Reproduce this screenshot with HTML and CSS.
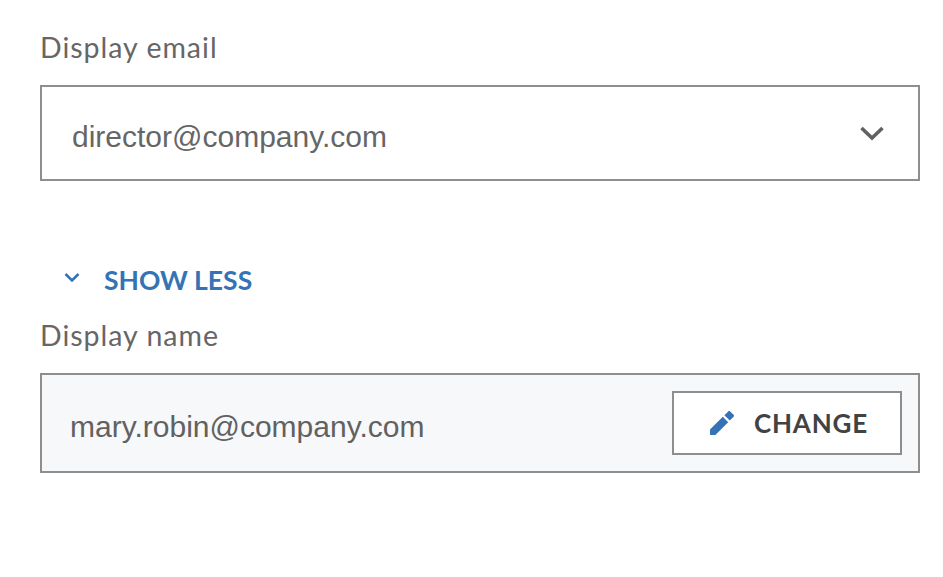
FILE: index.html
```html
<!DOCTYPE html>
<html lang="en">
<head>
    <meta charset="UTF-8">
    <meta name="viewport" content="width=device-width, initial-scale=1.0">
    <title>Display settings</title>
    <link rel="stylesheet" href="styles.css">
</head>
<body>

    <div class="container">
        <label class="field-label">Display email</label>
        <div class="select-box">
            <span class="select-value">director@company.com</span>
            <svg class="select-arrow" width="26" height="18" viewBox="0 0 26 18">
                <path d="M2.5 4 L13 14 L23.5 4" fill="none" stroke="#616161" stroke-width="3.6"/>
            </svg>
        </div>

        <div class="toggle-row">
            <svg class="toggle-arrow" width="16" height="12" viewBox="0 0 16 12">
                <path d="M1.5 2 L8 8.5 L14.5 2" fill="none" stroke="#3473b5" stroke-width="2.6"/>
            </svg>
            <span class="toggle-text">SHOW LESS</span>
        </div>

        <label class="field-label">Display name</label>
        <div class="name-box">
            <span class="name-value">mary.robin@company.com</span>
            <button class="change-button">
                <svg class="pencil" width="26" height="26" viewBox="0 0 26 26">
                    <path d="M1 19.6 V25 H6.4 L19.2 12.2 L13.8 6.8 Z" fill="#3473b5"/>
                    <path d="M15.4 5.2 L20.8 10.6 L24.6 6.8 C25.2 6.2 25.2 5.4 24.6 4.8 L21.2 1.4 C20.6 0.8 19.8 0.8 19.2 1.4 Z" fill="#3473b5"/>
                </svg>
                <span>CHANGE</span>
            </button>
        </div>
    </div>

</body>
</html>
```

FILE: styles.css
```css
body {
    margin: 0;
    padding: 0;
    background-color: #ffffff;
    color: #616161;
    font-family: 'Lato', sans-serif;
}

.container {
    width: 880px;
    padding: 29px 0 0 40px;
}

.field-label {
    display: block;
    font-size: 28.5px;
    line-height: 36px;
    letter-spacing: 1px;
    color: #666666;
}

.select-box {
    display: flex;
    justify-content: space-between;
    align-items: center;
    box-sizing: border-box;
    height: 96px;
    margin-top: 20px;
    padding: 0 33px 0 30px;
    border: 2px solid #8e8e8e;
}

.select-value {
    margin-top: 8px;
    font-family: 'Liberation Sans', sans-serif;
    font-size: 30px;
    color: #666666;
}

.toggle-row {
    display: flex;
    align-items: center;
    height: 36px;
    margin-top: 81px;
    padding-left: 24px;
}

.toggle-arrow {
    margin-bottom: 5px;
}

.toggle-text {
    margin-left: 24px;
    font-size: 26.5px;
    font-weight: 700;
    color: #3473b5;
}

.toggle-row + .field-label {
    margin-top: 19px;
}

.name-box {
    display: flex;
    justify-content: space-between;
    align-items: center;
    box-sizing: border-box;
    height: 100px;
    margin-top: 20px;
    padding: 0 16px 0 28px;
    border: 2px solid #8e8e8e;
    background-color: #f7f8fa;
}

.name-value {
    margin-top: 8px;
    font-family: 'Liberation Sans', sans-serif;
    font-size: 30px;
    color: #616161;
}

.change-button {
    display: flex;
    justify-content: center;
    align-items: center;
    gap: 19px;
    box-sizing: border-box;
    width: 230px;
    height: 64px;
    padding: 0 0 0 3px;
    border: 2px solid #8e8e8e;
    background-color: #ffffff;
    color: #424242;
    font-family: 'Lato', sans-serif;
    font-size: 26px;
    font-weight: 700;
    letter-spacing: 0.8px;
}
```
